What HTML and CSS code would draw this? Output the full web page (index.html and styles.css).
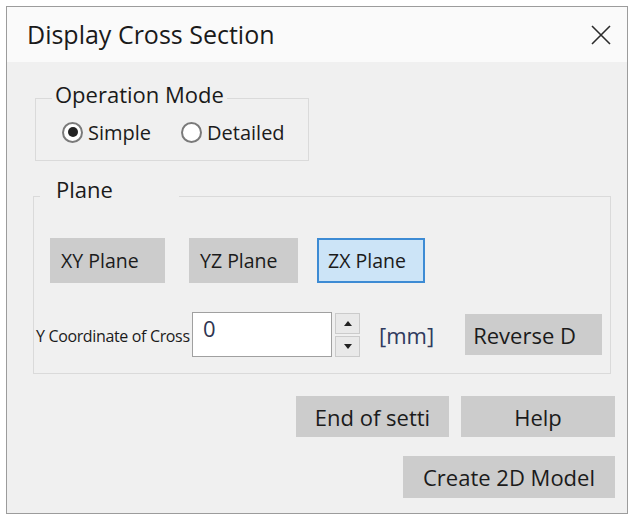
FILE: index.html
```html
<!DOCTYPE html>
<html>
<head>
<meta charset="utf-8">
<link rel="stylesheet" href="styles.css">
</head>
<body>
<div class="dialog">
  <div class="titlebar">
    <span class="title">Display Cross Section</span>
    <svg class="close" width="20" height="20" viewBox="0 0 20 20"><path d="M1 1 L19 19 M19 1 L1 19" stroke="#2b2b2b" stroke-width="1.6" fill="none"/></svg>
  </div>
  <div class="content">
    <div class="group opmode">
      <span class="legend legend-op">Operation Mode</span>
      <div class="radios">
        <span class="radio"><span class="circle checked"></span>Simple</span>
        <span class="radio radio-2"><span class="circle"></span>Detailed</span>
      </div>
    </div>
    <div class="group plane">
      <span class="legend legend-plane">Plane</span>
      <div class="plane-btns">
        <button class="btn pbtn pbtn-xy">XY Plane</button>
        <button class="btn pbtn pbtn-yz">YZ Plane</button>
        <button class="btn pbtn pbtn-zx">ZX Plane</button>
      </div>
      <div class="coord-row">
        <span class="coord-label">Y Coordinate of Cross</span>
        <div class="input">0</div>
        <div class="spinner">
          <div class="spin"><span class="arrow-up"></span></div>
          <div class="spin"><span class="arrow-down"></span></div>
        </div>
        <span class="unit">[mm]</span>
        <button class="btn reverse">Reverse D</button>
      </div>
    </div>
    <div class="actions">
      <div class="act-row">
        <button class="btn end">End of setti</button>
        <button class="btn help">Help</button>
      </div>
      <div class="act-row act-row-2">
        <button class="btn create">Create 2D Model</button>
      </div>
    </div>
  </div>
</div>
</body>
</html>
```
FILE: styles.css
```css
* { box-sizing: border-box; }
html, body { margin: 0; padding: 0; background: #ffffff; }
body { font-family: "Open Sans", "Noto Sans", sans-serif; color: #1b1b1b; }

.dialog {
  margin: 6px 0 0 6px;
  width: 622px;
  height: 508px;
  border: 1px solid #9c9c9c;
  background: #f0f0f0;
  display: flex;
  flex-direction: column;
}

.titlebar {
  height: 55px;
  flex: none;
  background: #fafafa;
  display: flex;
  align-items: center;
  justify-content: space-between;
  padding: 0 16px 0 20px;
}
.title { font-size: 25px; line-height: 1; color: #1a1a1a; }
.close { display: block; }

.content { flex: 1; padding: 0 12px 0 0; display: flex; flex-direction: column; }

.group { border: 1px solid #dadada; }
.legend {
  display: block;
  width: fit-content;
  font-size: 22px;
  line-height: 26px;
  background: #f0f0f0;
  color: #1a1a1a;
}

.opmode { margin: 36px 0 0 28px; width: 274px; height: 63px; }
.legend-op { margin: -18px 0 0 16px; padding: 0 3px; }
.radios { display: flex; align-items: center; margin: 12px 0 0 26px; height: 26px; font-size: 20px; }
.radio { display: flex; align-items: center; }
.radio-2 { margin-left: 30px; }
.circle {
  width: 21px; height: 21px; border-radius: 50%;
  border: 2px solid #7a7a7a; background: #ffffff;
  margin-right: 5px; position: relative; flex: none;
}
.circle.checked::after {
  content: ""; position: absolute; left: 3.5px; top: 3.5px;
  width: 10px; height: 10px; border-radius: 50%; background: #222;
}

.plane { margin: 35px 0 0 26px; width: 578px; height: 178px; }
.legend-plane { margin: -21px 0 0 6px; padding: 0 66px 0 16px; }

.btn {
  font-family: "Open Sans", "Noto Sans", sans-serif;
  background: #cccccc;
  border: none;
  color: #1b1b1b;
  padding: 0;
  margin: 0;
  font-size: 22px;
  white-space: nowrap;
  overflow: hidden;
}

.plane-btns { display: flex; margin: 36px 0 0 16px; }
.pbtn { height: 45px; font-size: 19.5px; text-align: left; padding-left: 11px; }
.pbtn-xy { width: 115px; }
.pbtn-yz { width: 109px; margin-left: 24px; }
.pbtn-zx { width: 108px; margin-left: 19px; background: #cce4f7; border: 2px solid #3d8bd4; padding-left: 9px; }

.coord-row { display: flex; align-items: center; margin: 29px 0 0 2px; }
.coord-label { font-size: 16px; letter-spacing: -0.35px; width: 156px; white-space: nowrap; padding-top: 3px; }
.input {
  width: 140px; height: 45px; background: #fff; border: 1px solid #a0a0a0;
  font-size: 22px; line-height: 30px; padding-left: 10px; color: #2e3552;
}
.spinner { display: flex; flex-direction: column; gap: 2px; margin-left: 3px; }
.spin {
  width: 25px; height: 21px; background: #e9e9e9; border: 1px solid #cbcbcb;
  display: flex; align-items: center; justify-content: center;
}
.arrow-up { width: 0; height: 0; border-left: 4px solid transparent; border-right: 4px solid transparent; border-bottom: 5px solid #222; }
.arrow-down { width: 0; height: 0; border-left: 4px solid transparent; border-right: 4px solid transparent; border-top: 5px solid #222; }
.unit { font-size: 22px; margin-left: 19px; color: #2f3a5e; }
.reverse { width: 137px; height: 41px; margin-left: 31px; text-align: left; padding-left: 8px; }

.actions { display: flex; flex-direction: column; align-items: flex-end; margin-top: 22px; }
.act-row { display: flex; gap: 12px; }
.act-row-2 { margin-top: 19px; }
.end { width: 153px; height: 41px; }
.help { width: 154px; height: 41px; }
.create { width: 212px; height: 42px; }
```
